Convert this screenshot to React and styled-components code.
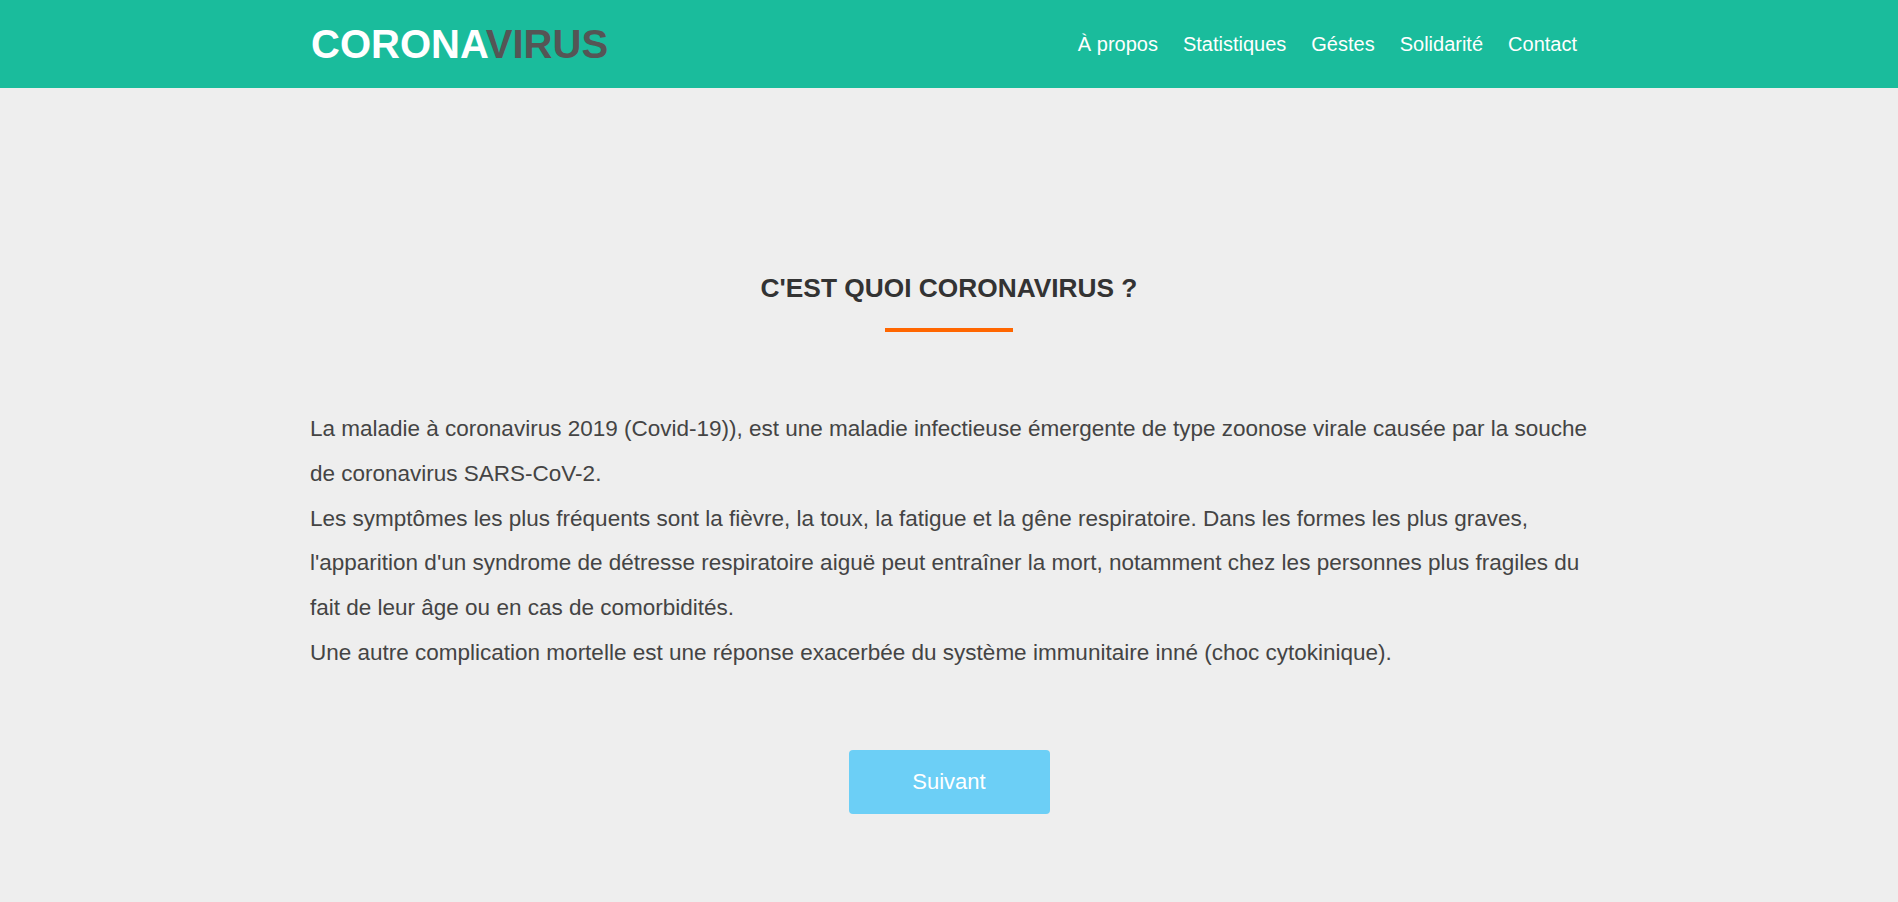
import React from 'react'
import styled, { createGlobalStyle } from 'styled-components'

const GlobalStyle = createGlobalStyle`
  * {
    box-sizing: border-box;
  }
  body {
    margin: 0;
    background-color: #eeeeee;
    font-family: 'Liberation Sans', Arial, sans-serif;
    color: #444;
  }
`

const links = ['À propos', 'Statistiques', 'Géstes', 'Solidarité', 'Contact']

const App = () => {
  return (
    <>
      <GlobalStyle />
      <HeaderStyled>
        <Container>
          <Logo>
            CORONA<LogoDark>VIRUS</LogoDark>
          </Logo>
          <Nav>
            {links.map((l) => (
              <NavLink key={l} href='#'>
                {l}
              </NavLink>
            ))}
          </Nav>
        </Container>
      </HeaderStyled>

      <Section>
        <Title>C'EST QUOI CORONAVIRUS ?</Title>
        <Underline />
        <Text>
          La maladie à coronavirus 2019 (Covid-19)), est une maladie infectieuse émergente de type zoonose virale
          causée par la souche de coronavirus SARS-CoV-2.
          <br />
          Les symptômes les plus fréquents sont la fièvre, la toux, la fatigue et la gêne respiratoire. Dans les
          formes les plus graves, l'apparition d'un syndrome de détresse respiratoire aiguë peut entraîner la mort,
          notamment chez les personnes plus fragiles du fait de leur âge ou en cas de comorbidités.
          <br />
          Une autre complication mortelle est une réponse exacerbée du système immunitaire inné (choc cytokinique).
        </Text>
        <Button>Suivant</Button>
      </Section>
    </>
  )
}

const HeaderStyled = styled.header`
  background-color: #1abc9c;
  height: 88px;
  width: 100%;
`

const Container = styled.div`
  width: 1280px;
  height: 100%;
  margin: 0 auto;
  display: flex;
  align-items: center;
  justify-content: space-between;
`

const Logo = styled.div`
  font-size: 40px;
  font-weight: bold;
  color: #fff;
  padding-left: 2px;
`

const LogoDark = styled.span`
  color: #555;
`

const Nav = styled.nav`
  display: flex;
  gap: 25px;
  padding-right: 12px;
`

const NavLink = styled.a`
  color: #fff;
  text-decoration: none;
  font-size: 20px;
`

const Section = styled.section`
  width: 1280px;
  margin: 0 auto;
  padding-top: 185px;
  display: flex;
  flex-direction: column;
  align-items: center;
`

const Title = styled.h2`
  margin: 0;
  font-size: 26.3px;
  font-weight: bold;
  color: #333;
`

const Underline = styled.div`
  width: 128px;
  height: 4px;
  background-color: #ff6600;
  margin-top: 24px;
`

const Text = styled.p`
  align-self: stretch;
  margin: 75px -14px 0 1px;
  font-size: 22.5px;
  line-height: 44.8px;
  color: #444;
`

const Button = styled.button`
  margin-top: 74px;
  width: 201px;
  height: 64px;
  border: none;
  border-radius: 4px;
  background-color: #6ccff6;
  color: #fff;
  font-family: 'Liberation Sans', Arial, sans-serif;
  font-size: 22px;
  cursor: pointer;
`

export default App
